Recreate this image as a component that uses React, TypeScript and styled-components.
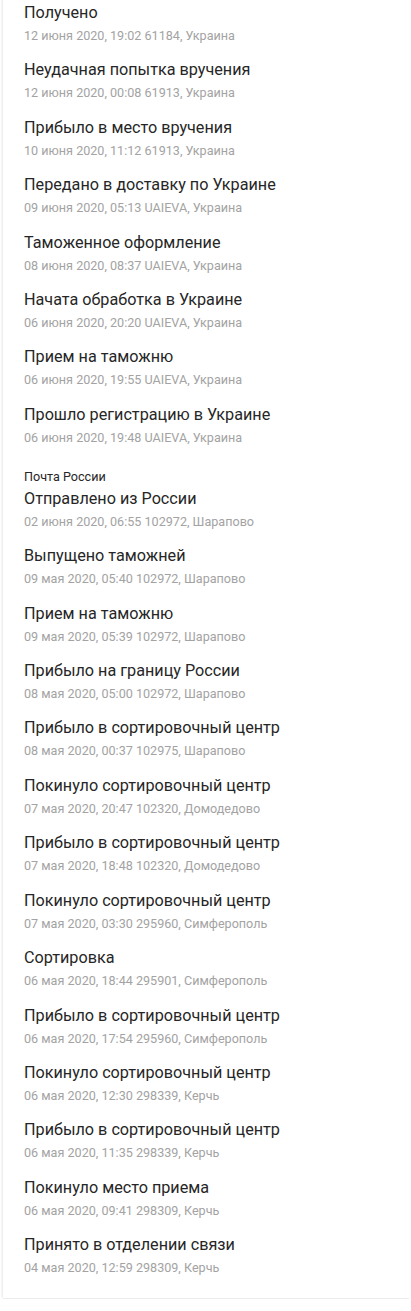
import styled, { createGlobalStyle } from 'styled-components';

const GlobalStyle = createGlobalStyle`
	html, body {
		margin: 0;
		padding: 0;
		background: #fff;
	}
	body {
		font-family: Roboto, 'Noto Sans', sans-serif;
	}
`;

type TrackEvent = { title: string; date: string; place: string };

const groups: { id: string; label?: string; events: TrackEvent[] }[] = [
	{
		id: 'ua',
		events: [
			{ title: 'Получено', date: '12 июня 2020, 19:02', place: '61184, Украина' },
			{ title: 'Неудачная попытка вручения', date: '12 июня 2020, 00:08', place: '61913, Украина' },
			{ title: 'Прибыло в место вручения', date: '10 июня 2020, 11:12', place: '61913, Украина' },
			{ title: 'Передано в доставку по Украине', date: '09 июня 2020, 05:13', place: 'UAIEVA, Украина' },
			{ title: 'Таможенное оформление', date: '08 июня 2020, 08:37', place: 'UAIEVA, Украина' },
			{ title: 'Начата обработка в Украине', date: '06 июня 2020, 20:20', place: 'UAIEVA, Украина' },
			{ title: 'Прием на таможню', date: '06 июня 2020, 19:55', place: 'UAIEVA, Украина' },
			{ title: 'Прошло регистрацию в Украине', date: '06 июня 2020, 19:48', place: 'UAIEVA, Украина' },
		],
	},
	{
		id: 'ru',
		label: 'Почта России',
		events: [
			{ title: 'Отправлено из России', date: '02 июня 2020, 06:55', place: '102972, Шарапово' },
			{ title: 'Выпущено таможней', date: '09 мая 2020, 05:40', place: '102972, Шарапово' },
			{ title: 'Прием на таможню', date: '09 мая 2020, 05:39', place: '102972, Шарапово' },
			{ title: 'Прибыло на границу России', date: '08 мая 2020, 05:00', place: '102972, Шарапово' },
			{ title: 'Прибыло в сортировочный центр', date: '08 мая 2020, 00:37', place: '102975, Шарапово' },
			{ title: 'Покинуло сортировочный центр', date: '07 мая 2020, 20:47', place: '102320, Домодедово' },
			{ title: 'Прибыло в сортировочный центр', date: '07 мая 2020, 18:48', place: '102320, Домодедово' },
			{ title: 'Покинуло сортировочный центр', date: '07 мая 2020, 03:30', place: '295960, Симферополь' },
			{ title: 'Сортировка', date: '06 мая 2020, 18:44', place: '295901, Симферополь' },
			{ title: 'Прибыло в сортировочный центр', date: '06 мая 2020, 17:54', place: '295960, Симферополь' },
			{ title: 'Покинуло сортировочный центр', date: '06 мая 2020, 12:30', place: '298339, Керчь' },
			{ title: 'Прибыло в сортировочный центр', date: '06 мая 2020, 11:35', place: '298339, Керчь' },
			{ title: 'Покинуло место приема', date: '06 мая 2020, 09:41', place: '298309, Керчь' },
			{ title: 'Принято в отделении связи', date: '04 мая 2020, 12:59', place: '298309, Керчь' },
		],
	},
];

const Card = styled.div`
	margin: -5.2px 2px 0 3px;
	padding-bottom: 14px;
	border-bottom: 1px solid #ececec;
	box-shadow: -2px 0 2px -1px rgba(0, 0, 0, 0.1);
`;

const Group = styled.section``;

const GroupLabel = styled.div`
	padding: 14.8px 0 2px 21px;
	font-size: 12.6px;
	line-height: 16px;
	color: #262626;
`;

const Item = styled.div`
	padding: 6.2px 16px 6.23px 21px;

	${GroupLabel} + & {
		padding-top: 0;
	}
`;

const Title = styled.div`
	font-size: 16.2px;
	line-height: 24px;
	color: #262626;
`;

const Subtitle = styled.div`
	margin-top: 1px;
	font-size: 12.6px;
	line-height: 20px;
	color: #a3a3a3;
`;

export default function App() {
	return (
		<>
			<GlobalStyle />
			<Card>
				{groups.map((group) => (
					<Group key={group.id}>
						{group.label && <GroupLabel>{group.label}</GroupLabel>}
						{group.events.map((ev, i) => (
							<Item key={i}>
								<Title>{ev.title}</Title>
								<Subtitle>
									{ev.date} {ev.place}
								</Subtitle>
							</Item>
						))}
					</Group>
				))}
			</Card>
		</>
	);
}
